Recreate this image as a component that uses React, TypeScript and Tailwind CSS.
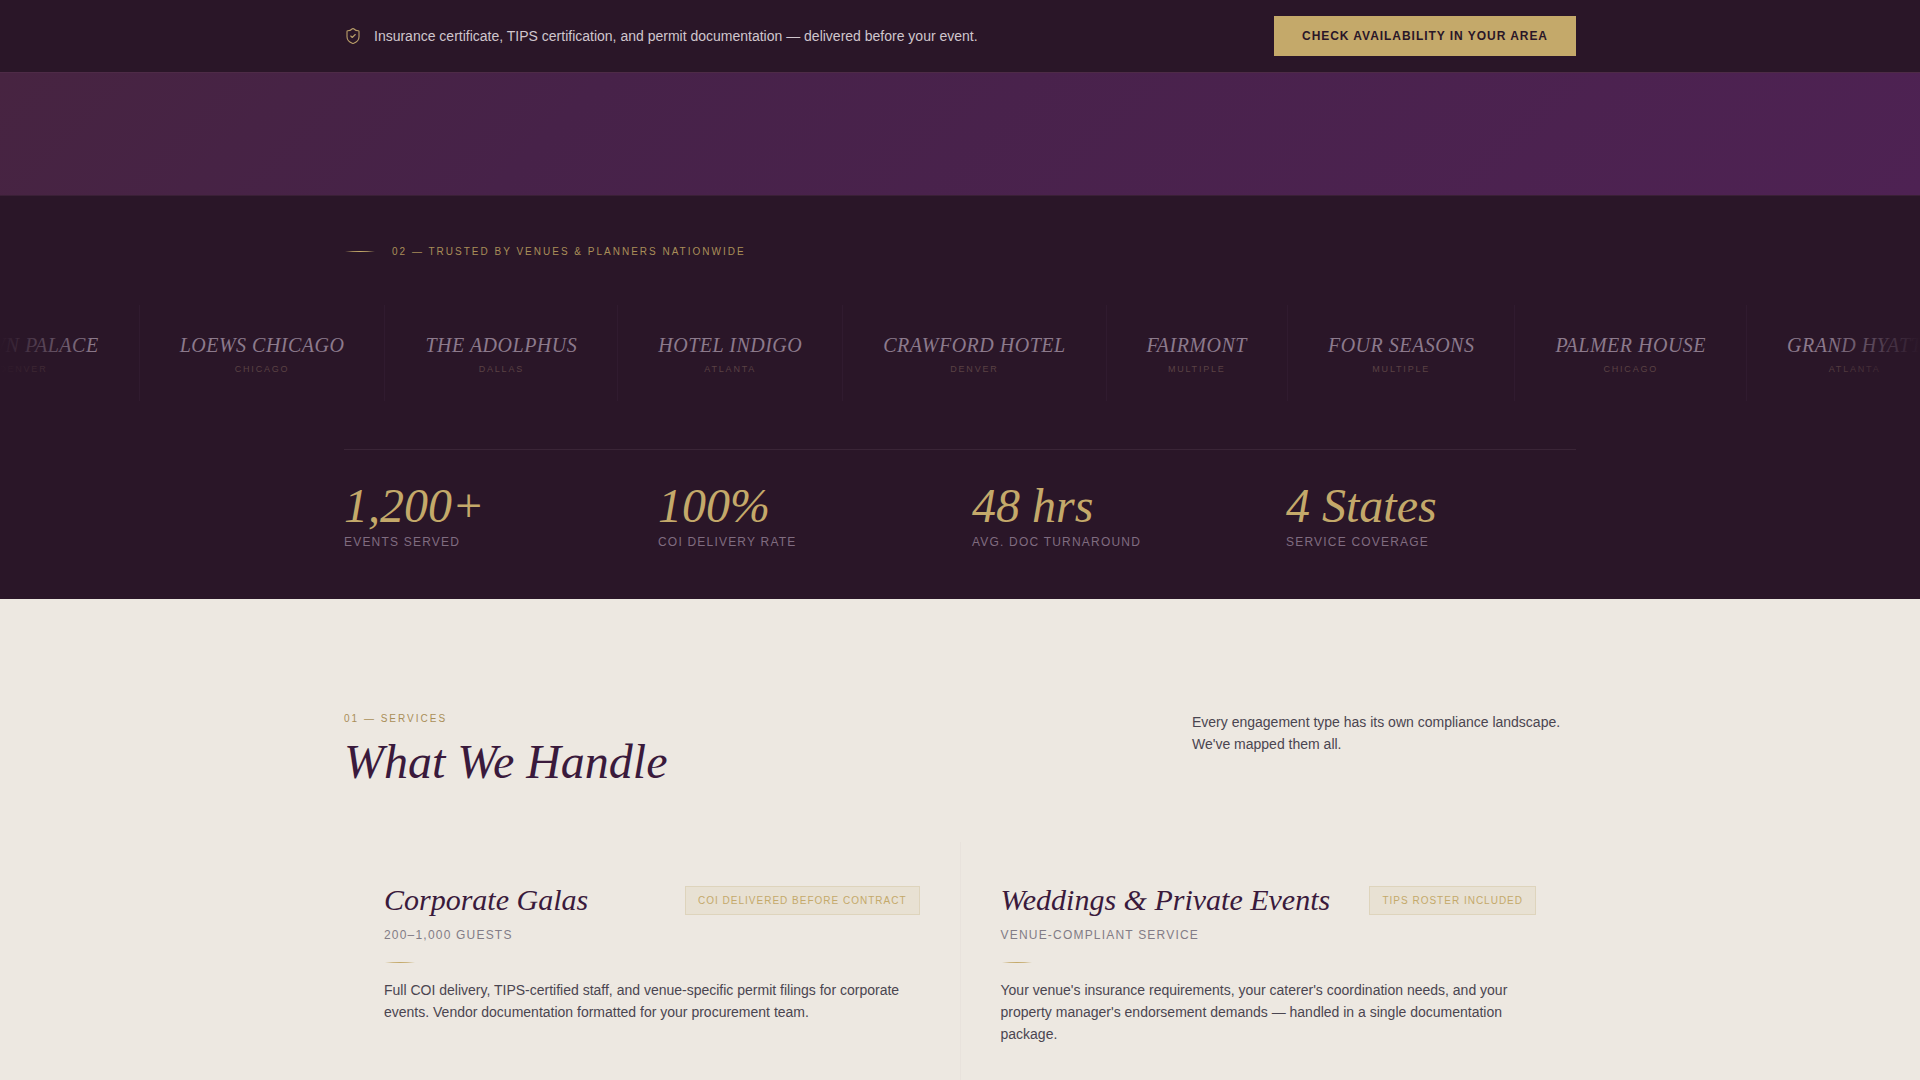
import { ShieldCheck } from "lucide-react";

const VENUES = [
  { name: "BROWN PALACE", city: "DENVER" },
  { name: "LOEWS CHICAGO", city: "CHICAGO" },
  { name: "THE ADOLPHUS", city: "DALLAS" },
  { name: "HOTEL INDIGO", city: "ATLANTA" },
  { name: "CRAWFORD HOTEL", city: "DENVER" },
  { name: "FAIRMONT", city: "MULTIPLE" },
  { name: "FOUR SEASONS", city: "MULTIPLE" },
  { name: "PALMER HOUSE", city: "CHICAGO" },
  { name: "GRAND HYATT", city: "ATLANTA" },
];

const STATS = [
  { value: "1,200+", label: "EVENTS SERVED" },
  { value: "100%", label: "COI DELIVERY RATE" },
  { value: "48 hrs", label: "AVG. DOC TURNAROUND" },
  { value: "4 States", label: "SERVICE COVERAGE" },
];

const SERVICES = [
  {
    title: "Corporate Galas",
    sub: "200–1,000 GUESTS",
    badge: "COI DELIVERED BEFORE CONTRACT",
    text: "Full COI delivery, TIPS-certified staff, and venue-specific permit filings for corporate events. Vendor documentation formatted for your procurement team.",
  },
  {
    title: "Weddings & Private Events",
    sub: "VENUE-COMPLIANT SERVICE",
    badge: "TIPS ROSTER INCLUDED",
    text: "Your venue's insurance requirements, your caterer's coordination needs, and your property manager's endorsement demands — handled in a single documentation package.",
  },
];

const serif = "font-['Liberation_Serif',serif] italic";
const wrap = "mx-auto w-full max-w-[1280px] px-6";
const eyebrow = "text-[10px] leading-[15px] tracking-[0.2em] text-[#a98e58]";

// Small tapered gold rule
function Flourish() {
  return (
    <svg className="h-[9px] w-8 shrink-0" viewBox="0 0 32 9" aria-hidden="true">
      <path d="M1 4.5 Q16 3.3 31 4.5 Q16 5.7 1 4.5Z" fill="#c4a96a" />
    </svg>
  );
}

function TopBar() {
  return (
    <header className="border-b border-[#4e2b47] bg-[#2a1628]">
      <div className={`${wrap} flex items-center justify-between gap-6 py-4`}>
        <p className="flex items-center gap-3 text-sm text-[#d0c6cd]">
          <ShieldCheck className="h-[18px] w-[18px] shrink-0 text-[#b89d68]" strokeWidth={1.5} />
          Insurance certificate, TIPS certification, and permit documentation — delivered before your event.
        </p>
        <button className="h-10 shrink-0 bg-[#c4a96a] px-7 text-xs font-bold tracking-[0.08em] text-[#2a1628]">
          CHECK AVAILABILITY IN YOUR AREA
        </button>
      </div>
    </header>
  );
}

function Trusted() {
  return (
    <section className="border-t border-[#3a2036] bg-[#2a1628] py-12">
      <div className={`${wrap} flex items-center gap-4`}>
        <Flourish />
        <h2 className={eyebrow}>02 — TRUSTED BY VENUES &amp; PLANNERS NATIONWIDE</h2>
      </div>

      <div className="relative mt-[30px] overflow-hidden pt-4 pb-6">
        <ul className="-ml-23 flex">
          {VENUES.map((v) => (
            <li key={v.name} className="flex h-24 shrink-0 flex-col items-center justify-center gap-1 border-r border-[#301b2f] px-10">
              <span className={`${serif} text-xl leading-7 tracking-wide whitespace-nowrap text-[#8c7a8c]`}>{v.name}</span>
              <span className="text-[9px] leading-3 tracking-[0.2em] text-[#5a4244]">{v.city}</span>
            </li>
          ))}
        </ul>
        <div className="pointer-events-none absolute inset-y-0 left-0 w-24 bg-linear-to-r from-[#2a1628] to-transparent" />
        <div className="pointer-events-none absolute inset-y-0 right-0 w-24 bg-linear-to-l from-[#2a1628] to-transparent" />
      </div>

      <div className={`${wrap} mt-6`}>
        <dl className="grid grid-cols-4 gap-6 border-t border-[#3a2537] pt-8">
          {STATS.map((s) => (
            <div key={s.label} className="flex flex-col-reverse gap-1">
              <dt className="text-xs leading-[17px] tracking-widest text-[#806c80]">{s.label}</dt>
              <dd className={`${serif} text-5xl text-[#c4a96a]`}>{s.value}</dd>
            </div>
          ))}
        </dl>
      </div>
    </section>
  );
}

function Services() {
  return (
    <section className="bg-[#ede8e1] pt-28">
      <div className={wrap}>
        <div className="flex items-start justify-between gap-8">
          <div>
            <p className={eyebrow}>01 — SERVICES</p>
            <h2 className={`${serif} mt-3 text-5xl text-[#3a1a3c]`}>What We Handle</h2>
          </div>
          <p className="w-96 text-sm leading-[22px] text-[#4a4550]">
            Every engagement type has its own compliance landscape. We've mapped them all.
          </p>
        </div>

        <div className="mt-14 grid grid-cols-2 gap-px bg-[#e8e2dc]">
          {SERVICES.map((s) => (
            <article key={s.title} className="bg-[#ede8e1] p-10">
              <div className="flex items-center justify-between gap-4">
                <h3 className={`${serif} text-3xl text-[#3a1a3c]`}>{s.title}</h3>
                <span className="border border-[#ded4bc] bg-[#e8e1d3] px-3 py-1.5 text-[10px] leading-[15px] tracking-widest whitespace-nowrap text-[#c4a96a]">
                  {s.badge}
                </span>
              </div>
              <p className="mt-2 text-xs leading-[18px] tracking-widest text-[#827c86]">{s.sub}</p>
              <div className="mt-3.5 mb-3 flex">
                <Flourish />
              </div>
              <p className="text-sm leading-[22px] text-[#4a4550]">{s.text}</p>
            </article>
          ))}
        </div>
      </div>
    </section>
  );
}

export default function App() {
  return (
    <div className="min-h-screen overflow-x-hidden bg-[#ede8e1] font-['Liberation_Sans',sans-serif]">
      <TopBar />
      <div className="h-[122px] bg-linear-135 from-[#472441] via-[#472249] via-30% to-[#4e2253]" />
      <Trusted />
      <Services />
    </div>
  );
}
